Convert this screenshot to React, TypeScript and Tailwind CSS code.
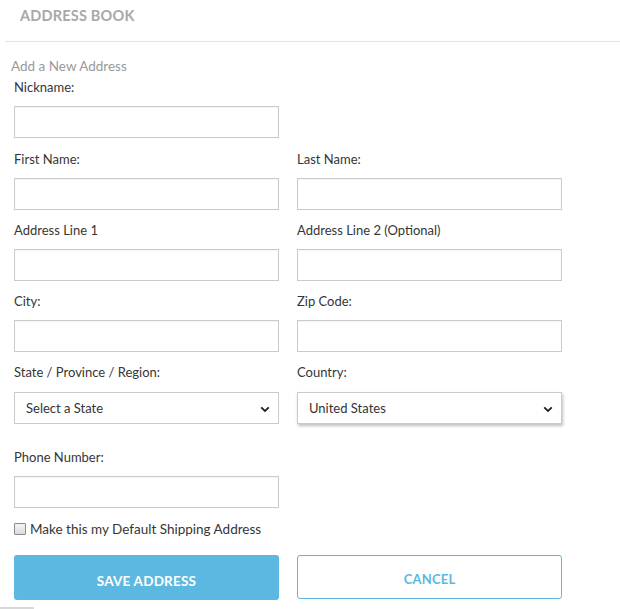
import React from "react";

const Chevron = () => (
  <svg width="10" height="7" viewBox="0 0 10 7" className="shrink-0">
    <path d="M1.2 1.3 L5 5 L8.8 1.3" fill="none" stroke="#222" strokeWidth="1.8" />
  </svg>
);

const Field = ({ label }: { label: string }) => (
  <div className="flex flex-col">
    <label className="h-[18px] leading-[18px] text-[13px] text-[#363636]">{label}</label>
    <div className="mt-[10px] h-[32px] border border-[#cbcbcb] bg-white shadow-[inset_0_1px_1px_rgba(0,0,0,0.04)]" />
  </div>
);

export default function App() {
  return (
    <div className="w-[620px] h-[609px] bg-white relative overflow-hidden" style={{ fontFamily: "Lato, 'Open Sans', sans-serif" }}>
      <div className="ml-[5px] h-[42px] border-b border-[#e4e4e0] pl-[15px] pt-[6px]">
        <h1 className="text-[14.5px] font-bold tracking-[0.2px] text-[#a8a8a8] leading-[20px]">ADDRESS BOOK</h1>
      </div>
      <div className="pl-[11px] pt-[16px]">
        <div className="text-[13.5px] text-[#999] leading-[16px]">Add a New Address</div>
      </div>
      <div className="pl-[14px] pt-[4px]">
        <div className="w-[265px]">
          <Field label="Nickname:" />
        </div>
        <div className="grid grid-cols-[265px_265px] gap-x-[18px] gap-y-[11px] mt-[12px]">
          <Field label="First Name:" />
          <Field label="Last Name:" />
          <Field label="Address Line 1" />
          <Field label="Address Line 2 (Optional)" />
          <Field label="City:" />
          <Field label="Zip Code:" />
          <div className="flex flex-col">
            <label className="h-[18px] leading-[18px] text-[13px] text-[#363636]">State / Province / Region:</label>
            <div className="mt-[11px] h-[32px] border border-[#cbcbcb] bg-white flex items-center justify-between pl-[11px] pr-[8px] pt-[2px] text-[13px] text-[#333]">
              <span>Select a State</span>
              <Chevron />
            </div>
          </div>
          <div className="flex flex-col">
            <label className="h-[18px] leading-[18px] text-[13px] text-[#363636]">Country:</label>
            <div className="mt-[11px] h-[32px] border border-[#cbcbcb] bg-white flex items-center justify-between pl-[11px] pr-[8px] pt-[2px] text-[13px] text-[#333] shadow-[1px_2px_3px_rgba(0,0,0,0.25)]">
              <span>United States</span>
              <Chevron />
            </div>
          </div>
        </div>
        <div className="w-[265px] mt-[24px]">
          <Field label="Phone Number:" />
        </div>
        <div className="flex items-center mt-[14px] h-[14px]">
          <div className="w-[12px] h-[12px] border border-[#8a8a8a] bg-gradient-to-b from-[#f4f4f4] to-[#dcdcdc] rounded-[1px]" />
          <span className="ml-[4px] text-[13.5px] text-[#363636] leading-[14px]">Make this my Default Shipping Address</span>
        </div>
        <div className="flex gap-[18px] mt-[19px]">
          <button className="w-[265px] h-[45px] rounded-[3px] bg-[#5bb8e1] text-white text-[13.5px] font-bold tracking-[0.2px] pt-[8px]">SAVE ADDRESS</button>
          <button className="w-[265px] h-[44px] rounded-[3px] border border-[#5bb8e1] bg-white text-[#5bb8e1] text-[13px] font-bold tracking-[0.2px] pt-[6px]">CANCEL</button>
        </div>
      </div>
      <div className="absolute left-0 bottom-0 w-[34px] h-[2px] bg-[#d8d8d8]" />
    </div>
  );
}
